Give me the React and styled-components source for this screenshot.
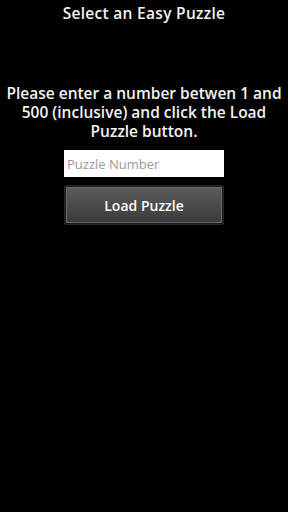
import React, { useState } from 'react';
import styled, { createGlobalStyle } from 'styled-components';

const GlobalStyle = createGlobalStyle`
  html, body {
    margin: 0;
    padding: 0;
    background: #000;
  }
  body {
    font-family: 'Comic Sans MS', 'Open Sans', sans-serif;
  }
`;

const Screen = styled.div`
  width: 288px;
  height: 512px;
  background: #000;
  color: #f4f4f4;
  display: flex;
  flex-direction: column;
  align-items: center;
`;

const Title = styled.h1`
  margin: 3px 0 0;
  font-size: 15.5px;
  font-weight: 600;
  line-height: 20px;
  letter-spacing: 0.3px;
`;

const Message = styled.p`
  margin: 61px 0 0;
  padding: 0 4px;
  font-size: 15.5px;
  font-weight: 600;
  line-height: 19px;
  text-align: center;
`;

const Form = styled.div`
  margin-top: 9px;
  width: 160px;
  display: flex;
  flex-direction: column;
  gap: 8px;
`;

const NumberInput = styled.input`
  box-sizing: border-box;
  width: 100%;
  height: 27px;
  border: none;
  outline: none;
  background: #fff;
  padding: 0 3px;
  font-family: inherit;
  font-size: 13px;
  color: #222;
  &::placeholder {
    color: #9a9a9a;
  }
`;

const LoadButton = styled.button`
  box-sizing: border-box;
  width: 100%;
  height: 40px;
  border: 1px solid #262626;
  border-radius: 2px;
  background: linear-gradient(#5c5c5c, #3a3a3a);
  box-shadow: inset 0 0 0 1px #1c1c1c, inset 0 0 0 2px #686868;
  color: #fafafa;
  font-family: inherit;
  font-size: 14px;
  font-weight: 600;
  cursor: pointer;
`;

export default function App() {
  const [value, setValue] = useState('');
  return (
    <>
      <GlobalStyle />
      <Screen>
        <Title>Select an Easy Puzzle</Title>
        <Message>
          Please enter a number betwen 1 and 500 (inclusive) and click the Load
          Puzzle button.
        </Message>
        <Form>
          <NumberInput
            placeholder="Puzzle Number"
            value={value}
            onChange={(e) => setValue(e.target.value)}
          />
          <LoadButton>Load Puzzle</LoadButton>
        </Form>
      </Screen>
    </>
  );
}
